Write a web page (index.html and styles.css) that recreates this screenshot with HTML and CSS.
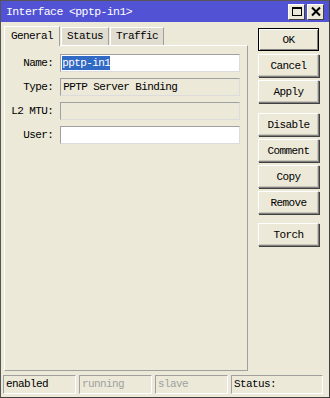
FILE: index.html
```html
<!DOCTYPE html>
<html>
<head>
<title>Interface &lt;pptp-in1&gt;</title>
<link rel="stylesheet" href="styles.css">
</head>
<body>
    <div class="window">
        <div class="titlebar">
            <span class="title">Interface &lt;pptp-in1&gt;</span>
            <div class="title-buttons">
                <span class="tbtn">
                    <svg width="12" height="11" viewBox="0 0 12 11"><rect x="1.5" y="1.5" width="9" height="8" fill="none" stroke="#000" stroke-width="1"/><rect x="1" y="1" width="10" height="2" fill="#000"/></svg>
                </span>
                <span class="tbtn">
                    <svg width="12" height="11" viewBox="0 0 12 11"><path d="M2 1.5 L10 9.5 M10 1.5 L2 9.5" stroke="#000" stroke-width="2"/></svg>
                </span>
            </div>
        </div>
        <div class="main">
            <div class="left">
                <div class="tabs">
                    <span class="tab active">General</span>
                    <span class="tab">Status</span>
                    <span class="tab">Traffic</span>
                </div>
                <div class="panel">
                    <div class="row">
                        <label>Name:</label>
                        <div class="field"><span class="sel">pptp-in1</span></div>
                    </div>
                    <div class="row">
                        <label>Type:</label>
                        <div class="field readonly">PPTP Server Binding</div>
                    </div>
                    <div class="row">
                        <label>L2 MTU:</label>
                        <div class="field readonly"></div>
                    </div>
                    <div class="row">
                        <label>User:</label>
                        <div class="field"></div>
                    </div>
                </div>
            </div>
            <div class="buttons">
                <button class="btn default">OK</button>
                <button class="btn">Cancel</button>
                <button class="btn">Apply</button>
                <button class="btn group">Disable</button>
                <button class="btn">Comment</button>
                <button class="btn">Copy</button>
                <button class="btn">Remove</button>
                <button class="btn group-small">Torch</button>
            </div>
        </div>
        <div class="statusbar">
            <span class="cell">enabled</span>
            <span class="cell dim">running</span>
            <span class="cell dim">slave</span>
            <span class="cell last">Status:</span>
        </div>
    </div>
</body>
</html>
```

FILE: styles.css
```css
body {
    margin: 0;
    padding: 0;
    font-family: 'Liberation Mono', 'DejaVu Sans Mono', monospace;
    font-size: 11px;
    letter-spacing: -0.6px;
    color: #000000;
    background-color: #ece9d8;
}

.window {
    width: 330px;
    height: 398px;
    box-sizing: border-box;
    border: 1px solid #555555;
    border-right-color: #404040;
    border-bottom-color: #404040;
    background-color: #ece9d8;
    display: flex;
    flex-direction: column;
}

.titlebar {
    height: 21px;
    background-color: #5252d4;
    display: flex;
    justify-content: space-between;
    align-items: center;
    padding: 0 5px 0 5px;
    flex-shrink: 0;
}

.title {
    color: #ffffff;
    font-size: 11.5px;
}

.title-buttons {
    display: flex;
    gap: 2px;
}

.tbtn {
    width: 15px;
    height: 14px;
    background-color: #ece9d8;
    border: 1px solid #ffffff;
    border-right-color: #404040;
    border-bottom-color: #404040;
    display: flex;
    justify-content: center;
    align-items: center;
}

.main {
    flex: 1;
    display: flex;
    padding: 3px 0 0 3px;
}

.left {
    width: 244px;
    display: flex;
    flex-direction: column;
}

.tabs {
    display: flex;
    align-items: flex-end;
    height: 20px;
}

.tab {
    height: 17px;
    line-height: 17px;
    padding: 0 5px;
    border: 1px solid #ffffff;
    border-right-color: #a0a0a0;
    border-bottom: none;
    background-color: #e0ddd0;
    margin-right: 1px;
}

.tab.active {
    height: 19px;
    line-height: 18px;
    background-color: #ece9d8;
    padding: 0 6px;
    margin-bottom: -1px;
    position: relative;
}

.panel {
    height: 326px;
    box-sizing: border-box;
    border: 1px solid #ffffff;
    border-right-color: #a0a0a0;
    border-bottom-color: #a0a0a0;
    padding: 8px 7px 0 0;
}

.row {
    display: flex;
    align-items: center;
    margin-bottom: 6px;
}

.row label {
    width: 49px;
    text-align: right;
    margin-right: 7px;
}

.field {
    width: 178px;
    height: 16px;
    line-height: 16px;
    padding: 0 1px;
    border: 1px solid #a0a0a0;
    border-right-color: #dcdcdc;
    border-bottom-color: #dcdcdc;
    background-color: #ffffff;
    white-space: nowrap;
}

.field.readonly {
    background-color: #ece9d8;
    padding-left: 2px;
}

.sel {
    background-color: #316ac5;
    color: #ffffff;
    padding: 1px 0;
}

.buttons {
    display: flex;
    flex-direction: column;
    padding: 3px 0 0 10px;
}

.btn {
    width: 61px;
    height: 23px;
    margin-bottom: 3px;
    font-family: 'Liberation Mono', 'DejaVu Sans Mono', monospace;
    font-size: 11px;
    letter-spacing: -0.6px;
    color: #000000;
    background-color: #ece9d8;
    border: 1px solid #ffffff;
    border-right-color: #808080;
    border-bottom-color: #808080;
    box-shadow: inset -1px -1px 0 #c8c5b8, 1px 1px 0 #404040;
    padding: 0;
}

.btn.default {
    border: 1px solid #000000;
    box-shadow: inset 1px 1px 0 #ffffff, inset -1px -1px 0 #808080;
}

.btn.group {
    margin-top: 7px;
}

.btn.group-small {
    margin-top: 6px;
}

.statusbar {
    height: 19px;
    display: flex;
    gap: 3px;
    padding: 0 6px 3px 2px;
    flex-shrink: 0;
}

.cell {
    width: 69px;
    height: 17px;
    line-height: 17px;
    padding-left: 2px;
    border: 1px solid #a0a0a0;
    border-right-color: #ffffff;
    border-bottom-color: #ffffff;
    white-space: nowrap;
}

.cell.dim {
    color: #a0a0a0;
}

.cell.last {
    flex: 1;
}
```
